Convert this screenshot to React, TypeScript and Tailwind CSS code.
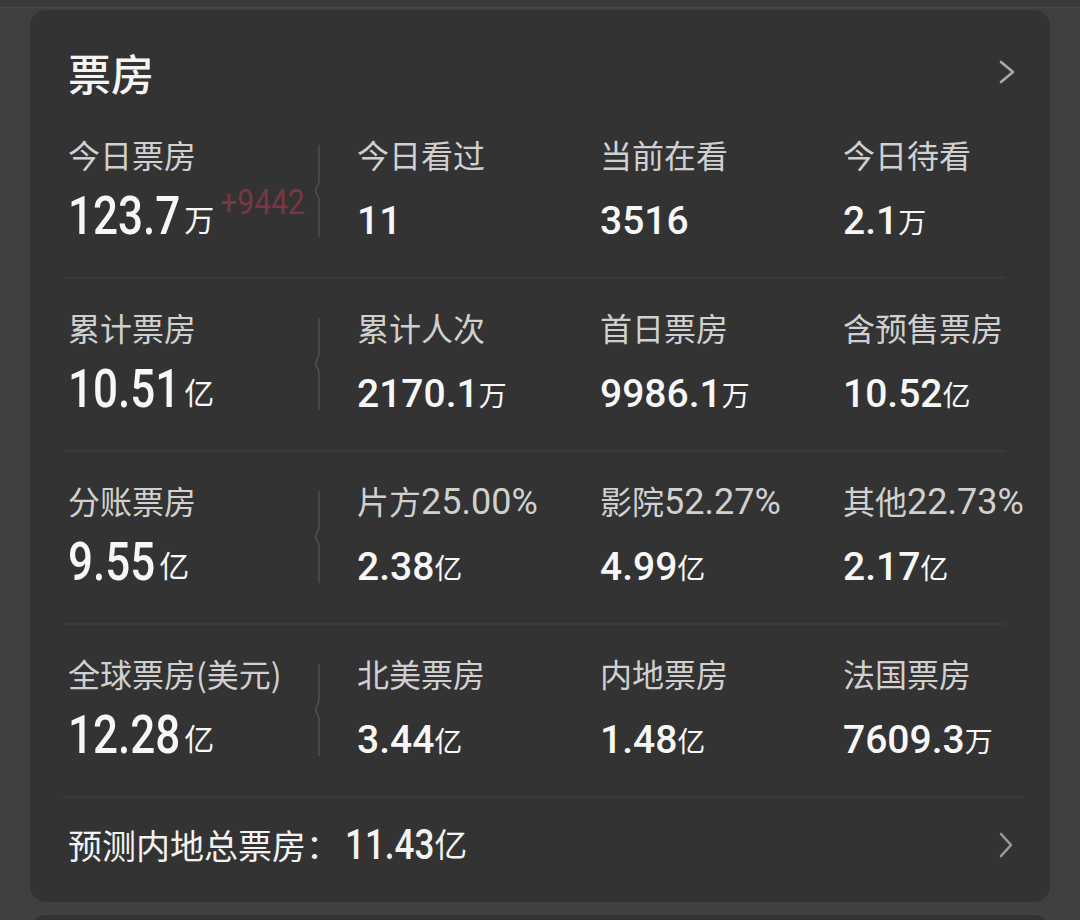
import React from "react";

type Cell = { cjk: string; pct?: string; num: string; unit?: string; extra?: string };

const rows: Cell[][] = [
  [
    { cjk: "今日票房", num: "123.7", unit: "万", extra: "+9442" },
    { cjk: "今日看过", num: "11" },
    { cjk: "当前在看", num: "3516" },
    { cjk: "今日待看", num: "2.1", unit: "万" },
  ],
  [
    { cjk: "累计票房", num: "10.51", unit: "亿" },
    { cjk: "累计人次", num: "2170.1", unit: "万" },
    { cjk: "首日票房", num: "9986.1", unit: "万" },
    { cjk: "含预售票房", num: "10.52", unit: "亿" },
  ],
  [
    { cjk: "分账票房", num: "9.55", unit: "亿" },
    { cjk: "片方", pct: "25.00%", num: "2.38", unit: "亿" },
    { cjk: "影院", pct: "52.27%", num: "4.99", unit: "亿" },
    { cjk: "其他", pct: "22.73%", num: "2.17", unit: "亿" },
  ],
  [
    { cjk: "全球票房(美元)", num: "12.28", unit: "亿" },
    { cjk: "北美票房", num: "3.44", unit: "亿" },
    { cjk: "内地票房", num: "1.48", unit: "亿" },
    { cjk: "法国票房", num: "7609.3", unit: "万" },
  ],
];

function Sep() {
  return (
    <svg width="8" height="92" viewBox="0 0 8 92" className="mt-[11px] shrink-0">
      <path
        d="M5 0 V36 C5 40 1.6 42 1.6 45.5 C1.6 49 5 51 5 55 V92"
        fill="none"
        stroke="#555555"
        strokeWidth="1.3"
      />
    </svg>
  );
}

function CellView({ c, big }: { c: Cell; big: boolean }) {
  return (
    <div className="whitespace-nowrap">
      <div className="h-[40px] leading-[40px] text-[32px] text-[#d0d0d0] font-['Noto_Sans_CJK_SC',sans-serif]">
        {c.cjk}
        {c.pct && (
          <span className="font-['Roboto',sans-serif] text-[36px] leading-[0]">{c.pct}</span>
        )}
      </div>
      {big ? (
        <div className="mt-[15px] h-[60px] leading-[60px] text-[44px] font-medium text-[#f7f7f7] font-['Roboto',sans-serif]">
          <span className="inline-block leading-none origin-[0_37px] scale-y-[1.21]">{c.num}</span>
          <span className="ml-[4px] font-['Noto_Sans_CJK_SC',sans-serif] font-normal text-[30px] leading-[0] align-[3px]">
            {c.unit}
          </span>
          {c.extra && (
            <span className="relative bottom-[20px] ml-[6px] inline-block leading-none origin-[0_25px] scale-y-[1.17] font-normal text-[30px] text-[#7a3742]">
              {c.extra}
            </span>
          )}
        </div>
      ) : (
        <div className="mt-[17px] h-[58px] leading-[60px] text-[39px] font-medium text-[#f7f7f7] font-['Roboto',sans-serif]">
          {c.num}
          {c.unit && (
            <span className="font-['Noto_Sans_CJK_SC',sans-serif] font-normal text-[28px] leading-[0] align-[1px]">
              {c.unit}
            </span>
          )}
        </div>
      )}
    </div>
  );
}

function Row({ cells, first, last }: { cells: Cell[]; first: boolean; last: boolean }) {
  return (
    <div
      className={
        first
          ? "ml-[35px] mr-[45px] pl-[3px] pt-[33px] pb-[28px] border-b-2 border-[#3a3a3a] flex items-start"
          : last
          ? "ml-[35px] mr-[45px] pl-[3px] pt-[28px] pb-[28px] flex items-start"
          : "ml-[35px] mr-[45px] pl-[3px] pt-[28px] pb-[28px] border-b-2 border-[#3a3a3a] flex items-start"
      }
    >
      <div className="w-[246px] shrink-0">
        <CellView c={cells[0]} big />
      </div>
      <Sep />
      <div className="ml-[35px] w-[243px] shrink-0">
        <CellView c={cells[1]} big={false} />
      </div>
      <div className="w-[243px] shrink-0">
        <CellView c={cells[2]} big={false} />
      </div>
      <div className="flex-1">
        <CellView c={cells[3]} big={false} />
      </div>
    </div>
  );
}

function Chevron({ w, h, color }: { w: number; h: number; color: string }) {
  return (
    <svg width={w} height={h} viewBox={`0 0 ${w} ${h}`} fill="none">
      <path
        d={`M2 2 L${w - 2} ${h / 2} L2 ${h - 2}`}
        stroke={color}
        strokeWidth="2.6"
        strokeLinecap="round"
        strokeLinejoin="round"
      />
    </svg>
  );
}

export default function App() {
  return (
    <div className="w-[1080px] h-[920px] overflow-hidden bg-[#404040]">
      <div className="h-[8px] bg-[#3a3a3a] border-b border-[#474747]" />
      <div className="mt-[2px] ml-[30px] w-[1020px] h-[892px] rounded-[16px] bg-[#333333]">
        <div className="pt-[37px] pl-[38px] pr-[35px] h-[91px] flex items-start justify-between">
          <div className="h-[50px] leading-[50px] text-[43px] font-medium text-[#f4f4f4] font-['Noto_Sans_CJK_SC',sans-serif]">
            票房
          </div>
          <div className="h-[50px] flex items-center">
            <Chevron w={16} h={24} color="#ababab" />
          </div>
        </div>
        {rows.map((r, i) => (
          <Row key={i} cells={r} first={i === 0} last={i === rows.length - 1} />
        ))}
        <div className="ml-[32px] mr-[27px] h-[2px] bg-[#3a3a3a]" />
        <div className="pt-[22px] pl-[38px] pr-[37px] flex items-center justify-between">
          <div className="h-[50px] leading-[50px] whitespace-nowrap text-[#f2f2f2]">
            <span className="text-[34px] font-['Noto_Sans_CJK_SC',sans-serif]">预测内地总票房：</span>
            <span className="ml-[5px] inline-block leading-none origin-[0_29px] scale-y-[1.2] text-[35px] font-medium font-['Roboto',sans-serif]">
              11.43
            </span>
            <span className="text-[33px] leading-[0] align-[2px] font-['Noto_Sans_CJK_SC',sans-serif]">亿</span>
          </div>
          <Chevron w={14} h={26} color="#9a9a9a" />
        </div>
      </div>
      <div className="mt-[13px] ml-[30px] w-[1020px] h-[30px] rounded-t-[16px] bg-[#333333]" />
    </div>
  );
}
